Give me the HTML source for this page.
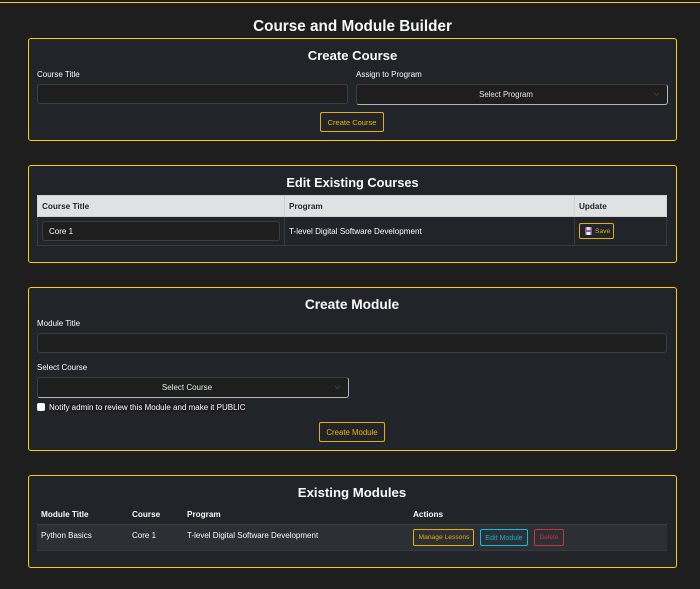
<!DOCTYPE html>
<html><head><meta charset="utf-8"><style>
html,body{margin:0;padding:0;width:700px;height:589px;overflow:hidden;background:#1e1e1e}
body{position:relative;font-family:"Liberation Sans",sans-serif;color:#f8f9fa}
div,span.t{position:absolute;box-sizing:border-box}
.t{white-space:nowrap;line-height:12px}
.c{transform:translateX(-50%)}
.card{left:28px;width:649px;background:#212529;border:1px solid #ffcc00;border-radius:3px}
.h{font-size:13.6px;font-weight:bold;line-height:18px}
.l{font-size:8px}
.b{font-size:8.2px;font-weight:bold}
.inp{background:#1e1e1e;border:1px solid #3c3f42;border-radius:3px}
.sel{background:#1e1e1e;border:1px solid #3c3f42;border-right:1px solid #b5b5b5;border-bottom:1px solid #b5b5b5;border-radius:3px}
.btn{border:1px solid #e5ae08;border-radius:2px}
</style></head><body>
<div style="left:0;top:2px;width:700px;height:1px;background:#ffcc00"></div>
<span class="t c h" style="left:352.5px;top:18px;font-size:15.3px">Course and Module Builder</span>

<div class="card" style="top:38px;height:103px"></div>
<span class="t c h" style="left:352.5px;top:47px;font-size:13.1px">Create Course</span>
<span class="t l" style="left:37px;top:69px">Course Title</span>
<span class="t l" style="left:356px;top:69px">Assign to Program</span>
<div class="inp" style="left:37px;top:84px;width:311px;height:20px"></div>
<div class="sel" style="left:356px;top:84px;width:312px;height:21px"></div>
<span class="t c l" style="left:506px;top:89px;color:#e4e6e8;font-size:7.8px">Select Program</span>
<svg style="position:absolute;left:653px;top:92px" width="7" height="5"><path d="M1 1l2.5 2.5L6 1" fill="none" stroke="#3a3d40" stroke-width="1"/></svg>
<div class="btn" style="left:320px;top:112px;width:64px;height:20px"></div>
<span class="t c l" style="left:352px;top:117px;color:#f0b400;font-size:7.5px">Create Course</span>

<div class="card" style="top:165px;height:98px"></div>
<span class="t c h" style="left:352.5px;top:174px;font-size:12.8px">Edit Existing Courses</span>
<div style="left:37px;top:195px;width:630px;height:51px;border:1px solid #373b3e;background:#212529"></div>
<div style="left:37px;top:195px;width:630px;height:22px;background:#e0e1e3;border:1px solid #cfd0d2"></div>
<div style="left:284px;top:195px;width:1px;height:22px;background:#cfd0d2"></div>
<div style="left:284px;top:217px;width:1px;height:29px;background:#373b3e"></div>
<div style="left:574px;top:195px;width:1px;height:22px;background:#cfd0d2"></div>
<div style="left:574px;top:217px;width:1px;height:29px;background:#373b3e"></div>
<span class="t b" style="left:42px;top:201px;color:#212529">Course Title</span>
<span class="t b" style="left:289px;top:201px;color:#212529">Program</span>
<span class="t b" style="left:579px;top:201px;color:#212529">Update</span>
<div class="inp" style="left:42px;top:221px;width:238px;height:20px"></div>
<span class="t l" style="left:49px;top:225.5px">Core 1</span>
<span class="t l" style="left:289px;top:225.5px;font-size:8.1px">T-level Digital Software Development</span>
<div class="btn" style="left:579px;top:223px;width:35px;height:16px"></div>
<svg style="position:absolute;left:585px;top:227px" width="7" height="8"><rect width="7" height="8" rx="1" fill="#8e5a9c"/><rect x="1.5" y="0" width="4" height="3" fill="#d8d8e0"/><rect x="1.5" y="5" width="4" height="3" fill="#f0f0f0"/></svg>
<span class="t l" style="left:595px;top:225.5px;color:#e5a800;font-size:6.7px">Save</span>

<div class="card" style="top:287px;height:164px"></div>
<span class="t c h" style="left:352px;top:296px;font-size:13.7px">Create Module</span>
<span class="t l" style="left:37px;top:318px">Module Title</span>
<div class="inp" style="left:37px;top:333px;width:630px;height:20px"></div>
<span class="t l" style="left:37px;top:362px">Select Course</span>
<div class="sel" style="left:37px;top:377px;width:312px;height:21px"></div>
<span class="t c l" style="left:187px;top:382px;color:#e4e6e8">Select Course</span>
<svg style="position:absolute;left:334px;top:385px" width="7" height="5"><path d="M1 1l2.5 2.5L6 1" fill="none" stroke="#3a3d40" stroke-width="1"/></svg>
<div style="left:37px;top:403px;width:8px;height:8px;background:#fff;border-radius:2px"></div>
<div style="left:49px;top:403px;width:196px;height:9px;background:#1e1e1e"></div>
<span class="t l" style="left:49px;top:402px">Notify admin to review this Module and make it PUBLIC</span>
<div class="btn" style="left:319px;top:422px;width:66px;height:20px"></div>
<span class="t c l" style="left:352px;top:427px;color:#f0b400;font-size:7.8px">Create Module</span>

<div class="card" style="top:475px;height:93px"></div>
<span class="t c h" style="left:352px;top:484px;font-size:13.2px">Existing Modules</span>
<div style="left:37px;top:524px;width:630px;height:27px;background:#2c3034;border-top:1px solid #373b3e;border-bottom:1px solid #373b3e"></div>
<span class="t b" style="left:41px;top:509px">Module Title</span>
<span class="t b" style="left:132px;top:509px">Course</span>
<span class="t b" style="left:187px;top:509px">Program</span>
<span class="t b" style="left:413px;top:509px">Actions</span>
<span class="t l" style="left:41px;top:530px">Python Basics</span>
<span class="t l" style="left:132px;top:530px">Core 1</span>
<span class="t l" style="left:187px;top:530px">T-level Digital Software Development</span>
<div class="btn" style="left:413px;top:529px;width:61px;height:17px"></div>
<span class="t c l" style="left:444px;top:532px;color:#e5ae08;font-size:6.7px">Manage Lessons</span>
<div class="btn" style="left:480px;top:529px;width:48px;height:17px;border-color:#0dbfe0"></div>
<span class="t c l" style="left:504px;top:532px;color:#0db0d0;font-size:7.1px">Edit Module</span>
<div class="btn" style="left:534px;top:529px;width:30px;height:17px;border-color:#c93342"></div>
<span class="t c l" style="left:549px;top:532px;color:#c93342;font-size:6.6px">Delete</span>
</body></html>
